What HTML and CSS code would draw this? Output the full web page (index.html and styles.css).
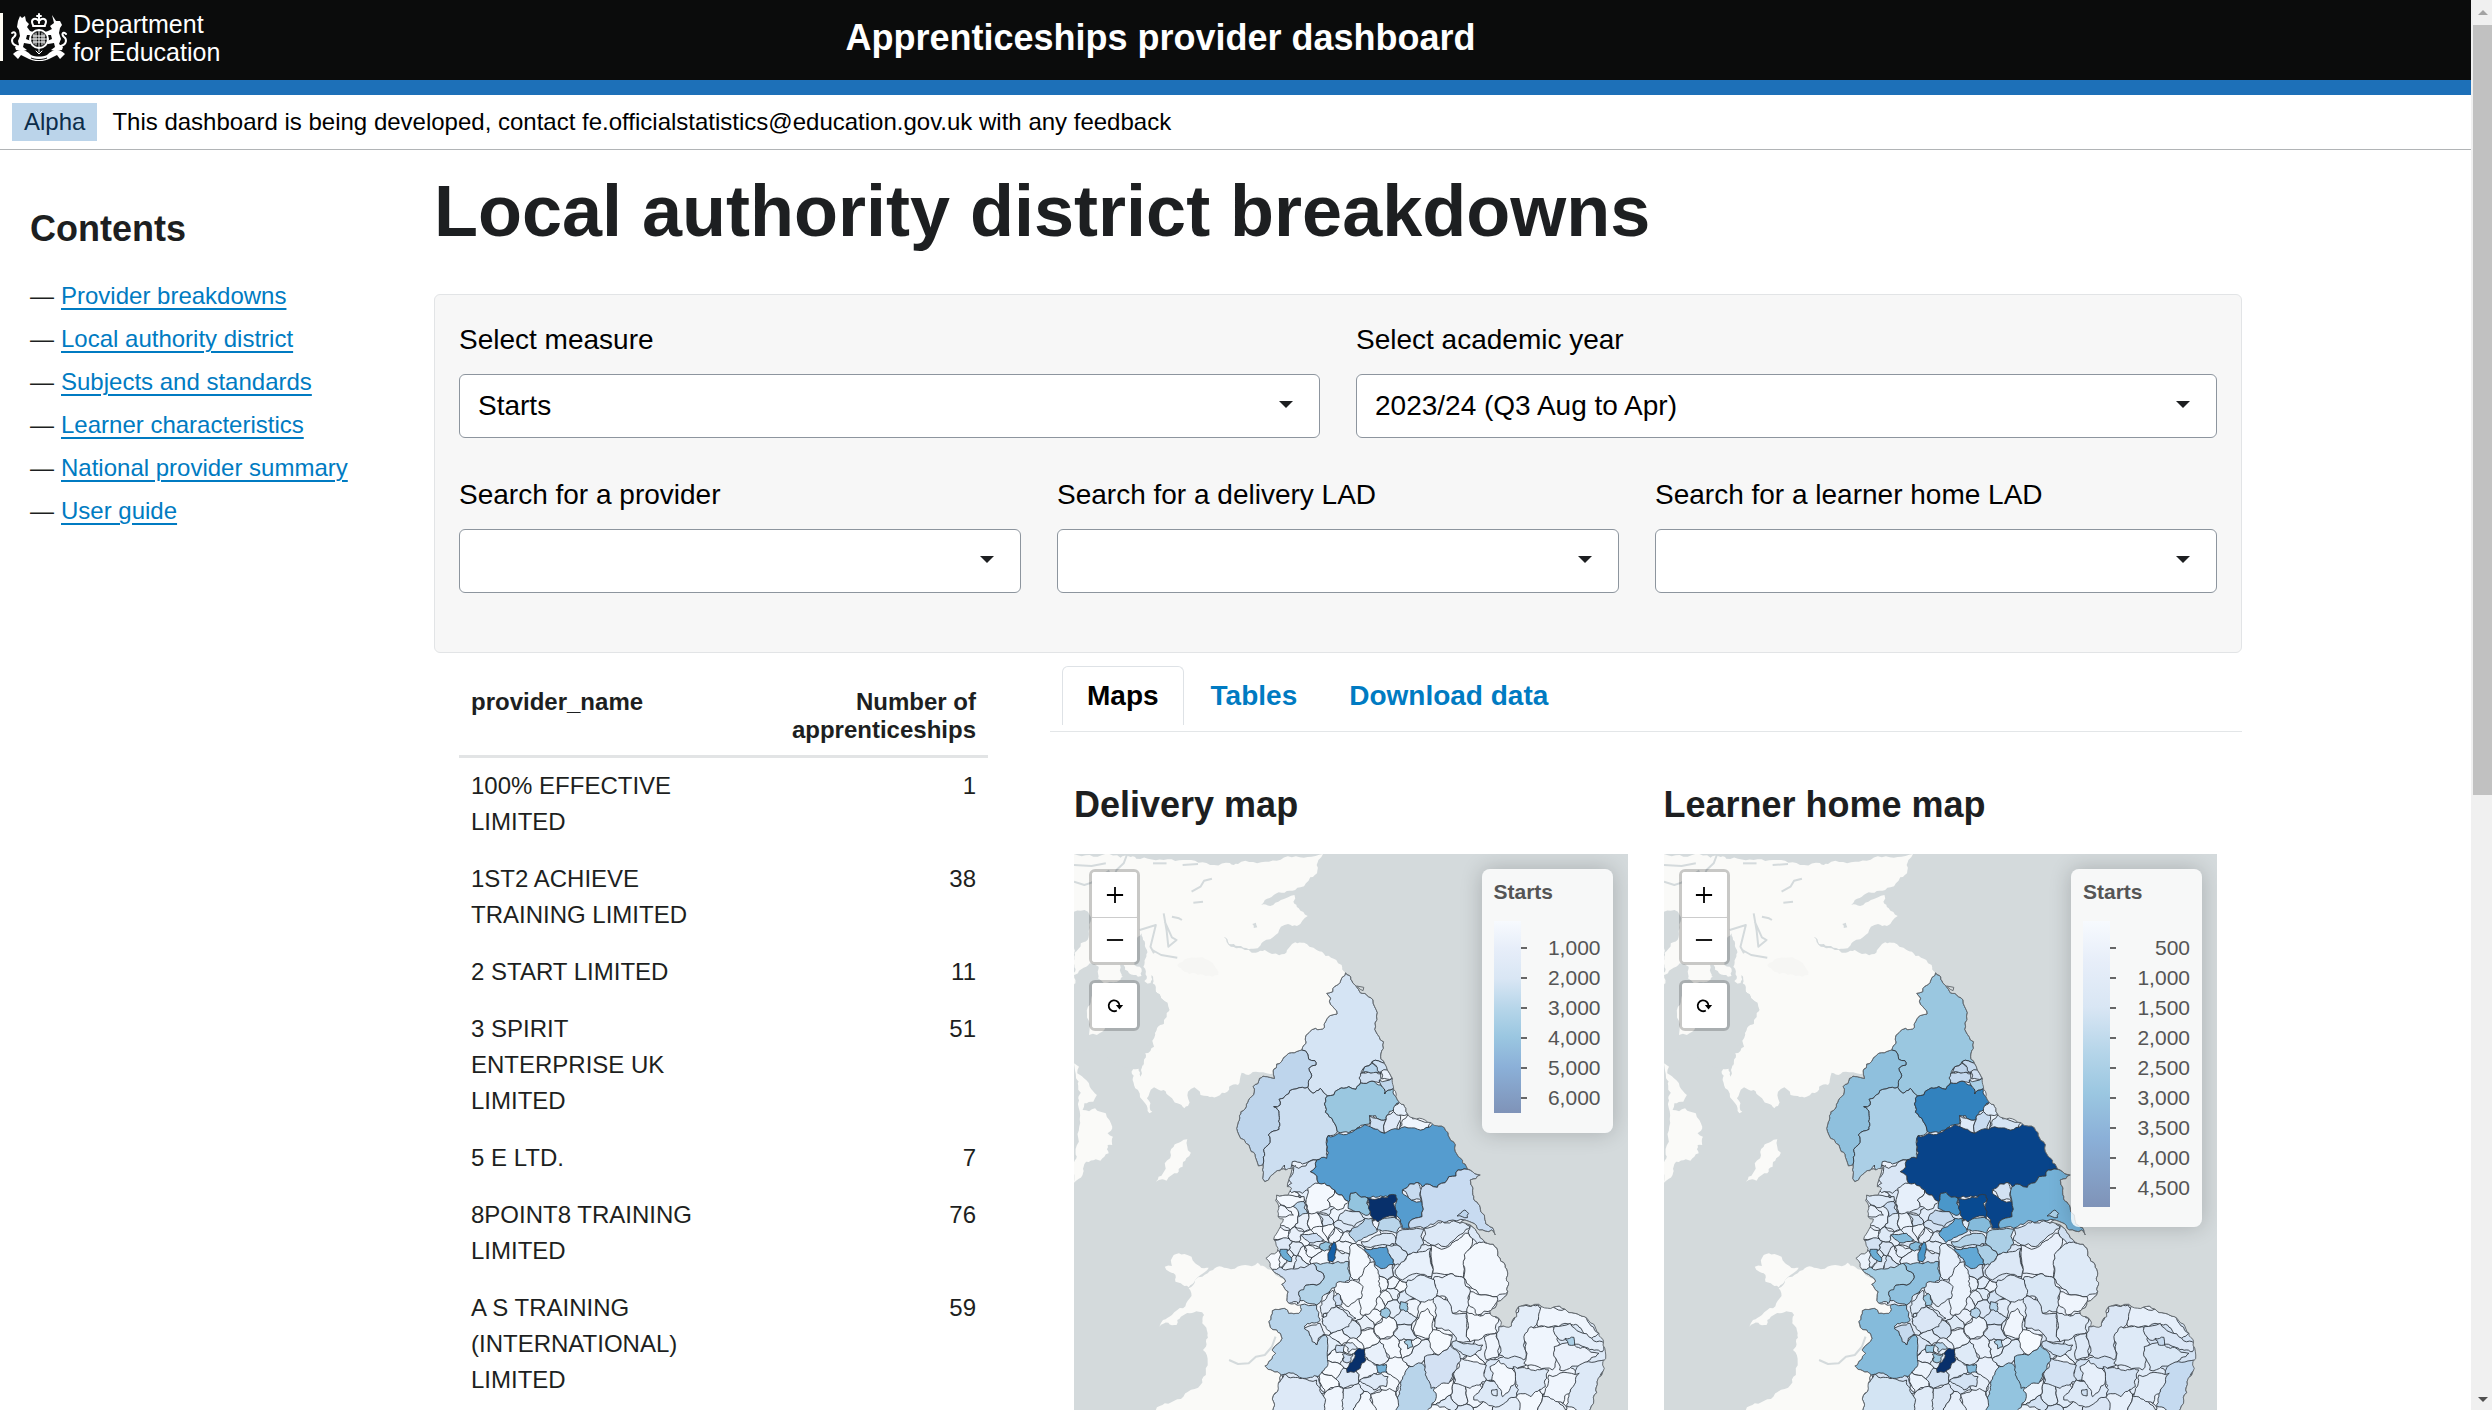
FILE: index.html
```html
<!DOCTYPE html>
<html lang="en">
<head>
<meta charset="utf-8">
<title>Apprenticeships provider dashboard</title>
<link rel="stylesheet" href="styles.css">
</head>
<body>
<div class="page">
  <header class="site-header">
    <a class="logo" href="#" aria-label="Department for Education">
      <svg class="crest" viewBox="0 0 58 48" aria-hidden="true">
        <g fill="#fff">
          <path d="M8 8L10 3L12 5L15 3L16 8L19 11L17 14L20 18L23 19L21 22L17 22L16 26L21 28L20 31L14 30L13 34L17 37L13 38L6 37L5 34L9 32L8 28L10 23L9 17L7 14Z"/>
          <path d="M42 2L46 8L50 8L52 12L50 15L49 20L51 26L49 31L53 34L52 37L45 38L41 37L45 34L44 30L38 31L37 28L42 26L41 22L37 22L35 19L38 18L42 16L40 13L44 10Z"/>
          <path d="M3 41C9 35 15 36 21 42C26 44 32 44 37 42C43 36 49 35 55 41L50 46L47 42L39 46C32 49 26 49 19 46L11 42L8 46Z"/>
        </g>
        <g fill="none" stroke="#fff" stroke-width="2" stroke-linecap="round" stroke-linejoin="round">
          <path d="M7 33C1 31 1 26 4 24C7 21 5 18 2 20M51 33C57 31 57 26 54 24C51 21 53 18 56 21"/>
          <circle cx="29" cy="26" r="9" fill="#0b0c0c"/>
          <path stroke-width="1" d="M29 18V34M21 26H37M24 21V31M26 20V32M32 20V32M34 21V31M23 23H35M23 29H35"/>
          <path d="M23 13H35M23 12C20 6 25 4 29 8C33 4 38 6 35 12M29 1V10M27 3H31"/>
          <path stroke-width="1" d="M26 38L29 41L32 38M29 36V39"/>
        </g>
        <path d="M21 45C26 47 32 47 37 45" fill="none" stroke="#0b0c0c" stroke-width="1"/>
      </svg>
      <span class="logo-text">Department<br>for Education</span>
    </a>
    <div class="site-title">Apprenticeships provider dashboard</div>
  </header>

  <div class="phase-banner">
    <strong class="phase-tag">Alpha</strong>
    <span>This dashboard is being developed, contact fe.officialstatistics@education.gov.uk with any feedback</span>
  </div>

  <div class="layout">
    <nav class="contents" aria-labelledby="contents-title">
      <h2 id="contents-title">Contents</h2>
      <ul>
        <li><a href="#">Provider breakdowns</a></li>
        <li><a href="#">Local authority district</a></li>
        <li><a href="#">Subjects and standards</a></li>
        <li><a href="#">Learner characteristics</a></li>
        <li><a href="#">National provider summary</a></li>
        <li><a href="#">User guide</a></li>
      </ul>
    </nav>

    <main>
      <h1>Local authority district breakdowns</h1>

      <form class="filters">
        <div class="filter-row">
          <div class="field">
            <label for="measure">Select measure</label>
            <div class="select"><select id="measure"><option>Starts</option></select></div>
          </div>
          <div class="field">
            <label for="year">Select academic year</label>
            <div class="select"><select id="year"><option>2023/24 (Q3 Aug to Apr)</option></select></div>
          </div>
        </div>
        <div class="filter-row">
          <div class="field">
            <label for="provider">Search for a provider</label>
            <div class="select"><select id="provider"><option></option></select></div>
          </div>
          <div class="field">
            <label for="delivery-lad">Search for a delivery LAD</label>
            <div class="select"><select id="delivery-lad"><option></option></select></div>
          </div>
          <div class="field">
            <label for="home-lad">Search for a learner home LAD</label>
            <div class="select"><select id="home-lad"><option></option></select></div>
          </div>
        </div>
      </form>

      <div class="results">
        <table class="providers">
          <thead>
            <tr><th scope="col">provider_name</th><th scope="col" class="num">Number of apprenticeships</th></tr>
          </thead>
          <tbody>
            <tr><td>100% EFFECTIVE LIMITED</td><td class="num">1</td></tr>
            <tr><td>1ST2 ACHIEVE TRAINING LIMITED</td><td class="num">38</td></tr>
            <tr><td>2 START LIMITED</td><td class="num">11</td></tr>
            <tr><td>3 SPIRIT ENTERPRISE UK LIMITED</td><td class="num">51</td></tr>
            <tr><td>5 E LTD.</td><td class="num">7</td></tr>
            <tr><td>8POINT8 TRAINING LIMITED</td><td class="num">76</td></tr>
            <tr><td>A S TRAINING (INTERNATIONAL) LIMITED</td><td class="num">59</td></tr>
          </tbody>
        </table>

        <section class="tabset">
          <div class="tabs" role="tablist">
            <button type="button" class="tab active" role="tab" aria-selected="true">Maps</button>
            <button type="button" class="tab" role="tab" aria-selected="false">Tables</button>
            <button type="button" class="tab" role="tab" aria-selected="false">Download data</button>
          </div>
          <div class="maps" role="tabpanel">
            <div class="map-col">
              <h2>Delivery map</h2>
              <div class="map">
                <svg class="map-canvas" data-series="delivery" viewBox="11 12 1549 1740" preserveAspectRatio="none" role="img" aria-label="Starts by delivery district"></svg>
                <div class="map-controls">
                  <div class="control"><button type="button" aria-label="Zoom in"><svg viewBox="0 0 20 20"><path d="M1 10H19M10 1V19"/></svg></button><button type="button" aria-label="Zoom out"><svg viewBox="0 0 20 20"><path d="M1 10H19"/></svg></button></div>
                  <div class="control"><button type="button" aria-label="Reset view"><svg viewBox="0 0 20 20"><path d="M12 15A6 6 0 1 1 15 10"/><path class="solid" d="M11 9H19L15 14Z"/></svg></button></div>
                </div>
                <div class="legend">
                  <strong>Starts</strong>
                  <div class="scale"><i class="ramp"></i><ol><li>1,000</li><li>2,000</li><li>3,000</li><li>4,000</li><li>5,000</li><li>6,000</li></ol></div>
                </div>
              </div>
            </div>
            <div class="map-col">
              <h2>Learner home map</h2>
              <div class="map">
                <svg class="map-canvas" data-series="home" viewBox="11 12 1549 1740" preserveAspectRatio="none" role="img" aria-label="Starts by learner home district"></svg>
                <div class="map-controls">
                  <div class="control"><button type="button" aria-label="Zoom in"><svg viewBox="0 0 20 20"><path d="M1 10H19M10 1V19"/></svg></button><button type="button" aria-label="Zoom out"><svg viewBox="0 0 20 20"><path d="M1 10H19"/></svg></button></div>
                  <div class="control"><button type="button" aria-label="Reset view"><svg viewBox="0 0 20 20"><path d="M12 15A6 6 0 1 1 15 10"/><path class="solid" d="M11 9H19L15 14Z"/></svg></button></div>
                </div>
                <div class="legend">
                  <strong>Starts</strong>
                  <div class="scale long"><i class="ramp"></i><ol><li>500</li><li>1,000</li><li>1,500</li><li>2,000</li><li>2,500</li><li>3,000</li><li>3,500</li><li>4,000</li><li>4,500</li></ol></div>
                </div>
              </div>
            </div>
          </div>
        </section>
      </div>
    </main>
  </div>
</div>
<div class="scrollbar" aria-hidden="true"><span class="arrow up"></span><span class="thumb"></span><span class="arrow down"></span></div>
<script src="map.js"></script>
</body>
</html>
```
FILE: styles.css
```css
* { box-sizing: border-box; }

body {
  margin: 0;
  height: 100vh;
  display: flex;
  overflow: hidden;
  background: #fff;
  color: #1d1f21;
  font-family: "Liberation Sans", Arial, sans-serif;
  font-size: 24px;
}
h1, h2, ul, ol { margin: 0; padding: 0; }
ul, ol { list-style: none; }
button, select { font: inherit; }
a { color: #007bc2; }

.page { flex: 1; min-width: 0; overflow: hidden; }

/* Header */
.site-header {
  display: grid;
  grid-template-columns: 1fr auto 1fr;
  align-items: start;
  height: 95px;
  padding-right: 150px;
  background: #0b0c0c;
  border-bottom: 15px solid #1d70b8;
}
.logo {
  display: flex;
  gap: 5px;
  margin-top: 13px;
  padding-left: 7px;
  border-left: 3px solid #fffdf4;
  height: 48px;
  color: #fff;
  text-decoration: none;
}
.crest { width: 58px; height: 48px; }
.logo-text { font-size: 25px; line-height: 28px; margin-top: -3px; white-space: nowrap; }
.site-title { padding-top: 17px; color: #fff; font-size: 36px; line-height: 42px; font-weight: bold; }

.phase-banner {
  display: flex;
  align-items: center;
  gap: 15px;
  height: 55px;
  padding-left: 12px;
  border-bottom: 1px solid #b1b4b6;
  color: #000;
}
.phase-tag { padding: 5px 12px; line-height: 28px; font-weight: normal; background: #bbd4ea; color: #0c2d4a; }

/* Layout */
.layout { display: grid; grid-template-columns: 404px 1fr; padding: 0 229px 0 30px; }

.contents h2 { margin-top: 58px; font-size: 36px; line-height: 42px; }
.contents ul { display: grid; gap: 12px; margin-top: 30px; }
.contents li { display: flex; gap: 7px; line-height: 31px; }
.contents li::before { content: "—"; }
.contents a { text-decoration-thickness: 2px; text-underline-offset: 4px; }

h1 { margin-top: 18px; font-size: 72px; line-height: 86px; }

/* Filters */
.filters {
  display: grid;
  gap: 36px;
  margin-top: 40px;
  padding: 24px 24px 59px;
  background: #f7f7f7;
  border: 1px solid #e2e4e6;
  border-radius: 6px;
  color: #000;
}
.filter-row { display: flex; gap: 36px; }
.field { flex: 1; }
.field label { display: block; margin-bottom: 13px; font-size: 28px; line-height: 42px; }
.select { position: relative; }
.select::after {
  content: "";
  position: absolute;
  right: 27px;
  top: 27px;
  border: 7px solid transparent;
  border-top-color: #1d1f21;
  border-bottom: 0;
  pointer-events: none;
}
select {
  display: block;
  appearance: none;
  width: 100%;
  height: 64px;
  padding: 0 18px 2px;
  border: 1px solid #8d959e;
  border-radius: 6px;
  background: #fff;
  color: #000;
  font-size: 28px;
}

/* Results */
.results { display: grid; grid-template-columns: 529fr 1192fr; gap: 62px; align-items: start; padding-left: 25px; }

.providers { width: 100%; margin-top: 25px; border-collapse: collapse; }
.providers th, .providers td { padding: 10px 12px 11px; text-align: left; vertical-align: top; line-height: 36px; }
.providers th { line-height: 28px; border-bottom: 3px solid #e2e4e5; }
.providers th:first-child { width: 50%; }
.providers .num { text-align: right; }
.providers th.num { padding-left: 60px; }

.tabs { display: flex; gap: 2px; margin-top: 13px; padding: 0 12px 6px; border-bottom: 1px solid #e3e6e8; }
.tab {
  height: 59px;
  padding: 0 24px;
  border: 1px solid transparent;
  border-bottom: 0;
  border-radius: 6px 6px 0 0;
  background: none;
  color: #007bc2;
  font-size: 28px;
  font-weight: bold;
}
.tab.active { border-color: #dee2e6; color: #000; }

.maps { display: grid; grid-template-columns: 1fr 1fr; gap: 36px; padding: 51px 25px 0 24px; }
.map-col h2 { font-size: 36px; line-height: 44px; margin-bottom: 27px; }
.map { position: relative; height: 580px; overflow: hidden; background: #d4dadc; }
.map-canvas { display: block; width: 100%; height: 100%; }
.map-canvas path { vector-effect: non-scaling-stroke; stroke-linejoin: round; }
.land { fill: #fafaf8; }
.water { fill: #d4dadc; }
.river { fill: none; stroke: #d4dadc; stroke-width: 2; }
.town { fill: #f6f6f4; }
.district { stroke: #333a40; stroke-width: 1; stroke-opacity: .9; }
.coast { fill: none; stroke: #6a7075; stroke-width: 1; }

.map-controls { position: absolute; left: 15px; top: 15px; display: grid; gap: 15px; }
.control { border: 3px solid rgba(0, 0, 0, .2); border-radius: 6px; background-clip: padding-box; }
.control button {
  display: grid;
  place-items: center;
  width: 45px;
  height: 45px;
  padding: 0;
  border: 0;
  background: #fff;
  border-radius: 3px;
}
.control button + button { border-top: 1px solid #ccc; border-radius: 0 0 3px 3px; }
.control svg { width: 18px; height: 18px; fill: none; stroke: #000; stroke-width: 2; }
.control .solid { fill: #000; stroke: none; }

.legend {
  position: absolute;
  right: 15px;
  top: 15px;
  width: 131px;
  padding: 8px 12px 20px;
  border-radius: 8px;
  background: rgba(255, 255, 255, .8);
  box-shadow: 0 0 22px rgba(0, 0, 0, .2);
  color: #555;
  font-size: 21px;
  line-height: 30px;
}
.scale { display: flex; justify-content: space-between; margin-top: 14px; }
.ramp {
  width: 27px;
  background: linear-gradient(#f7fafe, #e7eef9 14%, #d9e6f4 30%, #b5d5e9 46%, #9bc7e1 60%, #8bb0d8 76%, #7f93b8);
}
.scale ol { padding-top: 12px; }
.scale.long ol { padding-bottom: 4px; }
.scale li { display: flex; align-items: center; justify-content: space-between; width: 80px; height: 30px; }
.scale li::before { content: ""; width: 6px; height: 2px; background: #666; }

/* Scroll bar */
.scrollbar {
  display: flex;
  flex-direction: column;
  align-items: center;
  width: 21px;
  padding: 10px 0 8px 2px;
  background: #f0f0f0;
}
.thumb { width: 100%; height: calc(55vh - 6px); margin: 10px 0 auto; background: #c1c1c1; }
.arrow { border: 5px solid transparent; }
.arrow.up { border-bottom-color: #a3a3a3; border-top: 0; }
.arrow.down { border-top-color: #505050; border-bottom: 0; }
```
FILE: map.js
```js
const LAND = [
  "11,12 708,12 695,30 690,45 692,62 685,75 672,82 660,100 645,112 630,120 600,128 570,135 545,150 535,165 560,168 590,150 610,142 628,135 625,155 640,175 665,198 650,212 635,228 610,222 600,225 585,240 575,255 560,268 540,275 525,295 500,298 470,288 445,282 430,260 450,290 480,295 500,300 520,308 545,300 565,312 585,316 600,312 615,290 630,277 655,278 670,290 690,300 715,318 745,330 760,345 771,368 790,600 700,690 600,680 578,670 560,672 520,665 505,672 480,668 475,690 470,705 445,710 440,725 425,728 410,740 385,738 365,735 355,718 348,712 330,725 330,768 320,775 300,760 280,740 262,720 235,712 222,730 215,745 225,760 230,785 222,790 210,760 190,720 175,690 172,665 178,655 192,655 197,680 200,640 210,610 235,590 238,555 245,530 262,522 265,500 278,480 270,460 255,445 240,425 228,400 150,390 55,440 11,400",
  "11,640 25,650 20,670 45,690 55,710 75,735 65,755 40,760 35,780 70,775 85,785 100,790 110,810 118,830 105,850 120,860 118,885 105,885 108,910 85,932 72,928 45,935 38,950 35,975 11,998",
  "240,995 260,970 265,940 280,925 290,890 310,875 328,868 328,890 338,908 325,925 315,950 300,970 285,975 270,992 258,988",
  "265,1250 285,1248 290,1215 320,1212 340,1220 350,1240 375,1255 388,1253 365,1275 350,1290 332,1312 310,1300 295,1295 290,1270 278,1265",
  "332,1315 350,1290 370,1280 385,1270 400,1260 425,1250 450,1258 490,1245 525,1238 545,1250 565,1260 575,1275 610,1290 660,1380 660,1780 180,1780 240,1680 265,1660 300,1648 330,1625 365,1605 380,1575 385,1535 372,1500 385,1450 370,1420 375,1395 360,1385 335,1390 310,1400 300,1410 298,1425 275,1418 250,1430 260,1410 285,1395 300,1380 325,1360 335,1345"
];
const WATER = [
  "11,185 30,182 50,185 52,262 30,280 11,310",
  "11,375 22,370 45,350 55,340 80,350 78,385 95,400 130,395 145,375 140,345 150,345 165,370 178,375 190,380 200,378 195,350 180,345 190,260 200,250 215,300 205,350 215,380 212,405 225,400 228,375 240,425 255,445 278,480 262,522 245,530 238,555 210,610 197,655 172,655 130,640 40,600 11,620"
];
const KINTYRE = [
  "53,555 50,470 60,440 80,410 110,420 120,450 110,520 90,545 75,555",
  "85,350 100,340 130,345 148,380 130,395 100,395 80,380"
];
const RIVERS = [
  "11,95 40,105 60,98 110,62", "11,45 60,48 100,40", "160,12 150,40 130,60 120,90", "232,40 270,40",
  "315,45 358,42", "340,125 365,110 375,92 397,86", "345,158 372,155", "285,200 305,205 313,210",
  "262,190 270,240 275,290 298,270 285,262 265,215", "230,300 255,315 300,323", "195,240 240,225 225,290 235,310",
  "445,1530 470,1542 500,1540 520,1520 545,1515 565,1490 575,1460"
];
const ENGLAND = "771,368 800,408 812,428 835,440 848,450 860,488 855,530 865,560 877,595 870,612 880,640 888,660 902,685 905,710 912,740 922,758 940,775 945,793 1010,818 1030,828 1058,848 1073,875 1083,913 1120,960 1148,975 1120,990 1130,1040 1150,1085 1175,1130 1190,1155 1180,1140 1145,1140 1125,1118 1105,1110 1090,1120 1120,1125 1145,1155 1168,1180 1195,1195 1197,1218 1218,1245 1225,1270 1225,1325 1195,1355 1175,1385 1200,1405 1205,1430 1235,1428 1250,1400 1255,1370 1300,1363 1320,1370 1385,1377 1440,1400 1465,1422 1480,1450 1493,1475 1495,1555 1475,1595 1465,1660 1440,1690 1400,1780 568,1780 568,1638 590,1575 545,1548 575,1510 565,1500 580,1482 593,1465 578,1440 560,1432 556,1415 566,1382 600,1375 612,1390 640,1390 645,1365 612,1360 610,1325 592,1303 603,1293 565,1258 548,1225 580,1205 570,1168 597,1107 582,1100 578,1035 610,1035 620,1015 608,1010 632,945 604,960 580,962 560,980 545,995 540,975 540,945 527,948 507,905 466,835 478,785 508,740 512,710 530,685 552,680 572,685 578,642 620,608 648,600 660,580 658,568 687,535 712,532 715,515 747,492 718,430 735,425";

// Seeds of the small urban districts, drawn beneath the large ones.
const SEEDS = "610,1120 650,1125 690,1120 715,1110 740,1095 720,1080 700,1150 665,1165 635,1150 725,1140 760,1130 775,1165 630,1200 655,1215 680,1200 610,1215 575,1220 640,1235 765,1190 755,1220 700,1220 745,1150 620,1230 595,1145 885,1270 905,1300 925,1270 870,1300 885,1345 905,1330 920,1310 935,1340 960,1375 905,1370 850,1400 800,1385 825,1420 880,1430 940,1400 985,1430 940,1450 900,1490 945,1485 860,1510 830,1460 790,1440 760,1460 735,1490 750,1520 785,1490 775,1530 740,1560 770,1580 830,1560 850,1600 905,1560 880,1590 970,1510 720,1600 690,1610 740,1640 790,1640 870,1650 820,1660 1090,1640 1040,1630 1060,1660 1130,1640 1185,1630 1220,1600 1290,1660 1340,1670 1050,1690 1100,1690 1160,1680 1220,1680 1060,1410 990,1380 1170,1500 1120,1550 1200,1560 730,1420 1020,1560 910,710 890,840 905,820 945,820 600,1190 600,1220 685,1175 860,1360 1250,1720 960,1620 1400,1640 1420,1490 1350,1600 1090,1500".split(" ").map(p => p.split(",").map(Number));
const SMALL = {
  delivery: ["#f3f8fe", "#e8f0fa", "#f6faff", "#dde9f7", "#eff5fd", "#e3edf9", "#f3f8fe"],
  home: ["#e6effa", "#deeaf7", "#ebf3fc", "#d3e2f3", "#e0ebf8", "#dae6f5", "#e8f0fb"]
};

// outline, delivery colour, learner home colour
const DISTRICTS = [
  ["771,368 800,408 812,428 835,440 848,450 860,488 855,530 865,560 877,595 870,612 880,640 845,635 825,650 815,665 813,698 800,718 780,710 752,718 738,735 720,738 700,715 680,730 665,712 673,685 668,655 688,645 685,632 668,628 665,612 648,600 660,580 658,568 687,535 712,532 715,515 747,492 718,430 735,425", "#d5e4f4", "#9ac7e0"],
  ["648,600 665,612 668,628 685,632 688,645 668,655 673,685 665,712 650,712 615,722 605,735 585,748 588,765 570,770 585,790 585,838 555,855 560,868 542,898 540,945 527,948 507,905 466,835 478,785 508,740 512,710 530,685 552,680 572,685 578,642 620,608", "#bed5ec", "#8fc0dd"],
  ["665,712 680,730 700,715 720,738 715,770 725,800 745,830 748,845 722,857 718,900 720,925 690,930 650,942 622,935 615,960 604,960 600,945 590,960 580,962 560,980 545,995 540,975 540,945 542,898 560,868 555,855 585,838 585,790 570,770 588,765 585,748 605,735 615,722 650,712", "#ccdef0", "#abcfe6"],
  ["720,738 738,735 752,718 780,710 800,718 813,698 845,693 870,705 880,732 905,715 912,740 922,758 905,780 888,795 885,808 858,805 855,797 838,797 838,822 820,825 800,840 780,848 748,845 745,830 725,800 715,770", "#9ac7e0", "#3282be"],
  ["825,650 845,640 865,655 870,672 818,668", "#b5d2ea", "#bdd3ea"],
  ["813,670 870,672 870,685 865,698 845,693 813,698", "#cfdff1", "#c3d8ee"],
  ["845,635 880,640 888,660 860,662 855,645", "#d0e1f3", "#c5d9ee"],
  ["870,665 888,660 902,685 872,687", "#eaf1fb", "#d0dff1"],
  ["865,690 902,685 905,715 880,732 870,705", "#c0d6ec", "#abcfe6"],
  ["838,797 858,805 885,808 880,850 838,832", "#cfe0f2", "#dde9f7"],
  ["888,795 905,785 920,792 925,808 915,838 880,850 885,808", "#dfe9f7", "#c8dbf0"],
  ["922,758 940,775 945,793 925,795 905,785 905,775", "#e6effa", "#dde9f7"],
  ["945,795 1010,818 990,840 920,838 930,810", "#eff5fd", "#d5e4f4"],
  ["722,857 780,850 800,838 825,824 840,830 880,850 920,838 990,838 1015,820 1030,828 1058,848 1073,875 1083,913 1120,960 1085,960 1080,978 1060,980 1030,1005 1028,1012 985,1010 975,998 950,1002 930,1020 930,1030 955,1050 985,1055 985,1100 950,1115 950,1135 928,1135 925,1110 910,1070 915,1045 905,1035 890,1040 835,1045 800,1027 785,1030 780,1055 770,1050 745,1030 740,1020 712,1000 695,1000 672,965 690,930 718,925", "#559ccf", "#08448a"],
  ["930,1020 950,1002 975,998 985,1020 983,1053 955,1050", "#c7dbf0", "#d3e2f3"],
  ["785,1030 800,1027 835,1045 830,1060 835,1095 810,1085 778,1075 780,1055", "#93c4df", "#4a97ca"],
  ["985,1010 1028,1012 1030,1005 1060,980 1080,978 1085,960 1120,960 1148,975 1120,990 1130,1040 1150,1085 1175,1130 1190,1155 1180,1140 1145,1140 1125,1118 1105,1110 1060,1112 1030,1112 990,1135 950,1135 950,1115 985,1100 985,1055", "#c8dbf1", "#75b2d8"],
  ["1083,1098 1105,1080 1115,1090 1112,1103", "#bed5ec", "#abcfe6"],
  ["622,945 640,955 660,948 690,930 672,965 695,1000 675,1020 650,1030 620,1028 608,1010 620,1000 610,985 625,965", "#d5e4f5", "#d9e6f5"],
  ["665,1015 695,1000 712,1000 740,1020 720,1050 728,1070 710,1080 685,1090 668,1090 660,1060", "#f3f8fe", "#e6effa"],
  ["740,1020 745,1030 770,1050 780,1055 765,1075 750,1080 728,1070 720,1050", "#f6faff", "#e6effa"],
  ["578,1035 610,1035 655,1040 650,1060 625,1068 590,1065", "#f3f8fe", "#dde9f7"],
  ["590,1065 625,1095 582,1100", "#eff5fd", "#e6effa"],
  ["625,1070 655,1055 665,1090 640,1100", "#b8d4ea", "#c8dbf0"],
  ["770,1080 810,1085 825,1105 795,1130 765,1120 750,1110", "#d9e7f5", "#c5d9ee"],
  ["825,1105 845,1105 860,1145 800,1178 780,1150", "#b5d1e8", "#5fa6d4"],
  ["860,1110 880,1105 915,1107 928,1130 915,1150 860,1140", "#b9d5ea", "#85bbdb"],
  ["815,1175 850,1160 885,1150 910,1160 915,1180 890,1190 825,1190", "#dbe8f6", "#b5d3e9"],
  ["915,1150 950,1138 990,1138 990,1180 970,1210 945,1215 915,1185", "#cfe0f2", "#abcfe6"],
  ["822,1190 860,1195 885,1190 895,1215 910,1245 865,1252 850,1230", "#559ccf", "#62a8d5"],
  ["885,1185 915,1185 945,1215 935,1250 910,1245 895,1215", "#d5e4f4", "#abcfe6"],
  ["832,1043 888,1043 892,1035 912,1035 915,1048 905,1060 915,1085 913,1105 875,1105 860,1115 840,1095 835,1075", "#08306b", "#084a91"],
  ["990,1135 1030,1118 1080,1115 1120,1130 1100,1150 1050,1190 1010,1185 988,1170", "#dde9f7", "#d3e2f3"],
  ["1120,1125 1145,1155 1168,1180 1145,1185 1115,1150", "#dde9f7", "#d3e2f3"],
  ["1010,1185 1050,1195 1090,1165 1115,1150 1125,1185 1105,1225 1105,1290 1060,1273 1015,1270 1012,1230", "#f3f8fe", "#e8f0fb"],
  ["1105,1225 1125,1190 1168,1180 1195,1195 1197,1218 1218,1245 1225,1270 1225,1325 1195,1340 1150,1335 1110,1300", "#f3f8fe", "#deeaf7"],
  ["1020,1280 1060,1273 1105,1290 1120,1320 1110,1385 1070,1390 1055,1345 1025,1335", "#eaf2fc", "#d9e7f5"],
  ["1120,1325 1150,1335 1195,1340 1195,1355 1180,1380 1140,1395 1120,1370", "#f3f8fe", "#eff5fd"],
  ["1110,1385 1140,1395 1170,1390 1200,1405 1195,1445 1160,1455 1120,1475 1110,1440", "#f3f8fe", "#e0ebf8"],
  ["1020,1340 1055,1350 1070,1390 1110,1390 1110,1440 1120,1475 1080,1475 1060,1440 1020,1430", "#e6effa", "#dae6f5"],
  ["945,1215 1010,1195 1012,1280 970,1270 930,1290 910,1260", "#e8f1fb", "#dce8f6"],
  ["945,1290 980,1275 1020,1290 1025,1340 980,1355 940,1330", "#e3eefa", "#dce8f6"],
  ["820,1250 850,1235 870,1330 840,1390 815,1395 810,1290", "#f3f8fe", "#ebf3fc"],
  ["782,1190 800,1180 830,1210 840,1235 805,1290 785,1280", "#f3f8fe", "#e6effa"],
  ["690,1260 680,1240 720,1238 780,1235 782,1290 750,1305 720,1330 690,1365 640,1350 638,1330 660,1305 700,1300 710,1275", "#b3d3e8", "#8ec0de"],
  ["565,1258 610,1258 680,1240 690,1260 710,1275 700,1300 660,1305 640,1325 640,1360 612,1360 610,1325 592,1303 603,1293", "#cdddf0", "#a5cde3"],
  ["745,1300 790,1290 820,1310 815,1345 780,1370 745,1330", "#f3f8fe", "#e0ebf8"],
  ["735,1340 750,1330 760,1365 740,1365", "#cddef2", "#9ac7e0"],
  ["700,1370 735,1320 745,1370 705,1400", "#e3edf9", "#dde9f7"],
  ["710,1390 760,1370 800,1405 770,1430 730,1440 705,1415", "#e3edf9", "#dde9f7"],
  ["556,1415 566,1382 600,1375 612,1390 640,1390 645,1365 690,1365 700,1410 655,1430 690,1485 715,1455 722,1540 695,1580 650,1585 635,1575 590,1575 545,1548 575,1510 565,1500 580,1482 593,1465 578,1440 560,1432", "#b8d4ea", "#85bbdb"],
  ["655,1435 700,1420 712,1450 690,1485", "#dde9f7", "#c5d9ee"],
  ["745,1485 768,1485 765,1508 745,1508", "#cddef2", "#9ac7e0"],
  ["768,1485 790,1478 805,1495 780,1508", "#dde9f7", "#b5d3e9"],
  ["762,1512 792,1512 785,1535 765,1535", "#cddef2", "#9ac7e0"],
  ["808,1495 825,1497 828,1530 812,1555 795,1567 775,1568 780,1548 790,1535 795,1510", "#08306b", "#08306b"],
  ["858,1545 885,1543 887,1567 862,1568", "#75b2d8", "#85bbdb"],
  ["738,1175 745,1190 742,1210 735,1235 722,1232 725,1205", "#1560a8", "#4a97ca"],
  ["700,1182 733,1180 725,1200 700,1197", "#93c4df", "#85bbdb"],
  ["588,1198 608,1198 620,1235 605,1230", "#6badd5", "#6badd5"],
  ["645,1155 690,1150 710,1170 670,1178", "#cddef2", "#85bbdb"],
  ["925,1355 945,1360 940,1385 925,1380", "#9ac7e0", "#b5d3e9"],
  ["870,1380 885,1373 897,1388 885,1405 868,1395", "#9ac7e0", "#b5d3e9"],
  ["935,1475 955,1470 960,1490 945,1497", "#a5cde3", "#abcfe6"],
  ["568,1780 568,1638 590,1590 600,1572 650,1585 690,1590 710,1640 715,1780", "#dde9f7", "#d3e4f3"],
  ["915,1780 918,1650 925,1600 950,1550 985,1540 1010,1570 1025,1640 1000,1680 1000,1780", "#b8d4ea", "#93c4df"],
  ["992,1520 1030,1515 1065,1482 1095,1530 1070,1580 1060,1600 1010,1615 992,1560", "#d3e1f3", "#93c4df"],
  ["1070,1475 1155,1485 1150,1500 1120,1520 1070,1490", "#d5e4f4", "#cfe0f2"],
  ["1010,1440 1070,1460 1065,1482 1030,1515 1008,1480", "#f6faff", "#f6faff"],
  ["960,1440 1000,1375 1018,1400 1015,1440 1005,1465 965,1455", "#f6faff", "#eff5fd"],
  ["1160,1460 1195,1450 1200,1520 1165,1530", "#eff5fd", "#dde9f7"],
  ["1200,1430 1235,1428 1255,1370 1310,1365 1310,1410 1275,1460 1270,1530 1200,1515", "#e3edf9", "#dae6f5"],
  ["1318,1370 1385,1377 1440,1400 1480,1450 1460,1465 1430,1435 1385,1420 1310,1430", "#eff5fd", "#e6effa"],
  ["1290,1430 1350,1430 1370,1480 1350,1560 1270,1540 1270,1460", "#eff5fd", "#deeaf7"],
  ["1355,1430 1400,1420 1460,1465 1490,1475 1490,1505 1400,1475 1370,1470", "#e3edf9", "#dae6f5"],
  ["1355,1490 1400,1475 1480,1510 1440,1540 1370,1560", "#eaf1fb", "#d9e7f5"],
  ["1385,1465 1410,1462 1412,1485 1395,1485", "#abcfe6", "#c5d9ee"],
  ["1425,1545 1495,1530 1495,1560 1475,1595 1465,1660 1440,1690 1390,1670 1400,1620", "#dde9f7", "#c5daf0"],
  ["1075,1580 1095,1525 1165,1545 1165,1590 1120,1615 1075,1600", "#e6effa", "#d3e2f3"],
  ["1240,1550 1340,1560 1330,1610 1290,1640 1245,1640", "#dde9f7", "#d3e2f3"],
  ["1340,1575 1425,1570 1400,1620 1380,1660 1325,1640", "#eff5fd", "#e0ebf8"],
  ["1165,1590 1245,1600 1250,1640 1200,1670 1130,1650", "#dde9f7", "#dde9f7"],
  ["1180,1620 1195,1618 1195,1638 1182,1635", "#dde9f7", "#cfe0f2"],
  ["1175,1550 1200,1530 1240,1560 1245,1600 1210,1640 1180,1590", "#f3f8fe", "#e6effa"],
  ["810,1590 850,1570 890,1580 885,1610 850,1620", "#dde9f7", "#d3e2f3"],
  ["705,1405 745,1370 790,1405 780,1430 730,1450", "#e0ebf8", "#dae6f5"]
];

const parse = s => s.split(" ").map(p => p.split(",").map(Number));

// Roughens an edge. The offset depends only on the two end points, so
// neighbouring districts keep a common border.
function roughen(a, b, out) {
  const dx = b[0] - a[0], dy = b[1] - a[1], len = Math.hypot(dx, dy);
  if (len < 12) { out.push(b); return; }
  const flip = a[0] > b[0] || (a[0] === b[0] && a[1] > b[1]);
  const [p, q] = flip ? [b, a] : [a, b];
  const n = Math.sin(p[0] * 12.9898 + p[1] * 78.233 + q[0] * 37.719 + q[1] * 4.581) * 43758.5453;
  const k = (n - Math.floor(n) - 0.5) * (len > 45 ? 0.14 : 0.4);
  const m = [(a[0] + b[0]) / 2 - (q[1] - p[1]) * k, (a[1] + b[1]) / 2 + (q[0] - p[0]) * k];
  roughen(a, m, out);
  roughen(m, b, out);
}
function outline(points) {
  const out = [];
  points.forEach((p, i) => roughen(p, points[(i + 1) % points.length], out));
  return "M" + out.map(p => p[0].toFixed(1) + "," + p[1].toFixed(1)).join("L") + "Z";
}

// Cell of the plane nearer to one seed than to any other.
function cell(i) {
  const s = SEEDS[i];
  let poly = [[s[0] - 90, s[1] - 90], [s[0] + 90, s[1] - 90], [s[0] + 90, s[1] + 90], [s[0] - 90, s[1] + 90]];
  SEEDS.forEach((t, j) => {
    if (j === i) return;
    const nx = t[0] - s[0], ny = t[1] - s[1];
    const c = (nx * (s[0] + t[0]) + ny * (s[1] + t[1])) / 2;
    const next = [];
    poly.forEach((p, n) => {
      const q = poly[(n + 1) % poly.length];
      const dp = nx * p[0] + ny * p[1] - c, dq = nx * q[0] + ny * q[1] - c;
      if (dp <= 0) next.push(p);
      if ((dp < 0 && dq > 0) || (dp > 0 && dq < 0)) {
        const f = dp / (dp - dq);
        next.push([Math.round(p[0] + (q[0] - p[0]) * f), Math.round(p[1] + (q[1] - p[1]) * f)]);
      }
    });
    poly = next;
  });
  return poly;
}

document.querySelectorAll(".map-canvas").forEach(svg => {
  const series = svg.dataset.series, col = series === "delivery" ? 1 : 2;
  const shape = (cls, d, extra = "") => `<path class="${cls}" d="${d}" ${extra}/>`;
  const coast = outline(parse(ENGLAND));
  let html = `<clipPath id="clip-${series}"><path d="${coast}"/></clipPath>`;
  LAND.forEach(s => html += shape("land", outline(parse(s))));
  WATER.forEach(s => html += shape("water", outline(parse(s))));
  KINTYRE.forEach(s => html += shape("land", outline(parse(s))));
  RIVERS.forEach(s => html += shape("river", "M" + s.split(" ").join("L")));
  html += shape("town", outline(parse("300,345 330,325 370,322 400,340 415,375 380,378 350,370 320,365")));
  html += shape("water", outline(parse("510,222 520,218 524,232 514,234")));
  html += `<g clip-path="url(#clip-${series})">` + shape("district", coast, 'fill="#eaf1fb"');
  SEEDS.forEach((s, i) => html += shape("district", outline(cell(i)), `fill="${SMALL[series][i % 7]}"`));
  DISTRICTS.forEach(d => html += shape("district", outline(parse(d[0])), `fill="${d[col]}"`));
  svg.innerHTML = html + "</g>" + shape("coast", coast) + shape("coast", "M802,408L822,412L820,422L812,418Z");
});
```
